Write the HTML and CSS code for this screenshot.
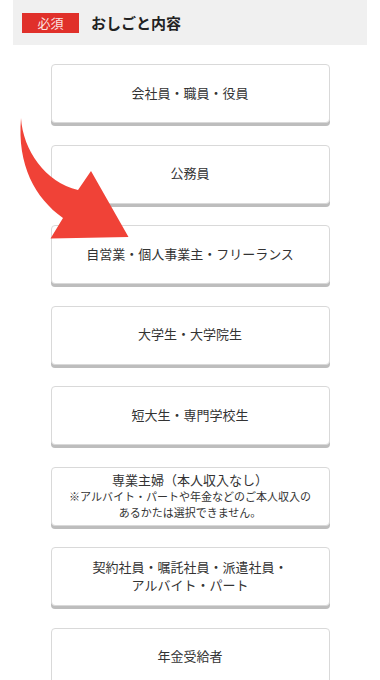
FILE: index.html
```html
<!DOCTYPE html>
<html lang="ja">
<head>
<meta charset="utf-8">
<title>おしごと内容</title>
<link rel="stylesheet" href="styles.css">
</head>
<body>
<div class="page">
  <div class="section-head">
    <span class="badge">必須</span>
    <h2 class="section-title">おしごと内容</h2>
  </div>
  <div class="options">
    <button class="option">会社員・職員・役員</button>
    <button class="option">公務員</button>
    <button class="option">自営業・個人事業主・フリーランス</button>
    <button class="option">大学生・大学院生</button>
    <button class="option">短大生・専門学校生</button>
    <button class="option option-multi">
      <span class="opt-main">専業主婦（本人収入なし）</span>
      <span class="opt-note">※アルバイト・パートや年金などのご本人収入の<br>あるかたは選択できません。</span>
    </button>
    <button class="option option-two">契約社員・嘱託社員・派遣社員・<br>アルバイト・パート</button>
    <button class="option">年金受給者</button>
  </div>
  <svg class="arrow" width="140" height="250" viewBox="0 0 140 250" aria-hidden="true">
    <path d="M21,118 C23,150 45,182 78,190 L91,171 L128.5,237 L50.5,238.5 L63,218 C35,198 17,165 21,118 Z" fill="#f04237"/>
  </svg>
</div>
</body>
</html>
```
FILE: styles.css
```css
html, body {
  margin: 0;
  padding: 0;
  background: #ffffff;
}
body {
  font-family: "Noto Sans CJK JP", "Noto Sans", sans-serif;
  color: #333333;
}
.page {
  position: relative;
  width: 380px;
  min-height: 680px;
}
.section-head {
  margin: 0 13px;
  height: 45px;
  background: #f0f0f0;
  display: flex;
  align-items: center;
  gap: 12px;
  padding-left: 9px;
  box-sizing: border-box;
}
.badge {
  width: 57px;
  height: 20px;
  background: #e0302a;
  color: #fbe3e2;
  font-size: 13px;
  line-height: 20px;
  text-align: center;
  margin-top: 1px;
}
.section-title {
  margin: 0;
  font-size: 15px;
  font-weight: bold;
  color: #222222;
  line-height: 20px;
}
.options {
  display: flex;
  flex-direction: column;
  align-items: center;
  gap: 21.5px;
  padding-top: 19px;
}
.option {
  width: 279px;
  height: 59px;
  box-sizing: border-box;
  background: #ffffff;
  border: 1px solid #d9d9d9;
  border-radius: 4px;
  box-shadow: 0 3px 0 #bdbdbd;
  font-family: "Noto Sans CJK JP", "Noto Sans", sans-serif;
  font-size: 13px;
  color: #333333;
  line-height: 18px;
  text-align: center;
  padding: 0 0 2px;
  display: flex;
  flex-direction: column;
  align-items: center;
  justify-content: center;
}
.option-multi {
  line-height: 16px;
  padding: 0 0 1px;
}
.opt-main {
  font-size: 13px;
  line-height: 17px;
}
.opt-note {
  font-size: 11px;
  line-height: 16px;
}
.arrow {
  position: absolute;
  left: 0;
  top: 0;
}
```
